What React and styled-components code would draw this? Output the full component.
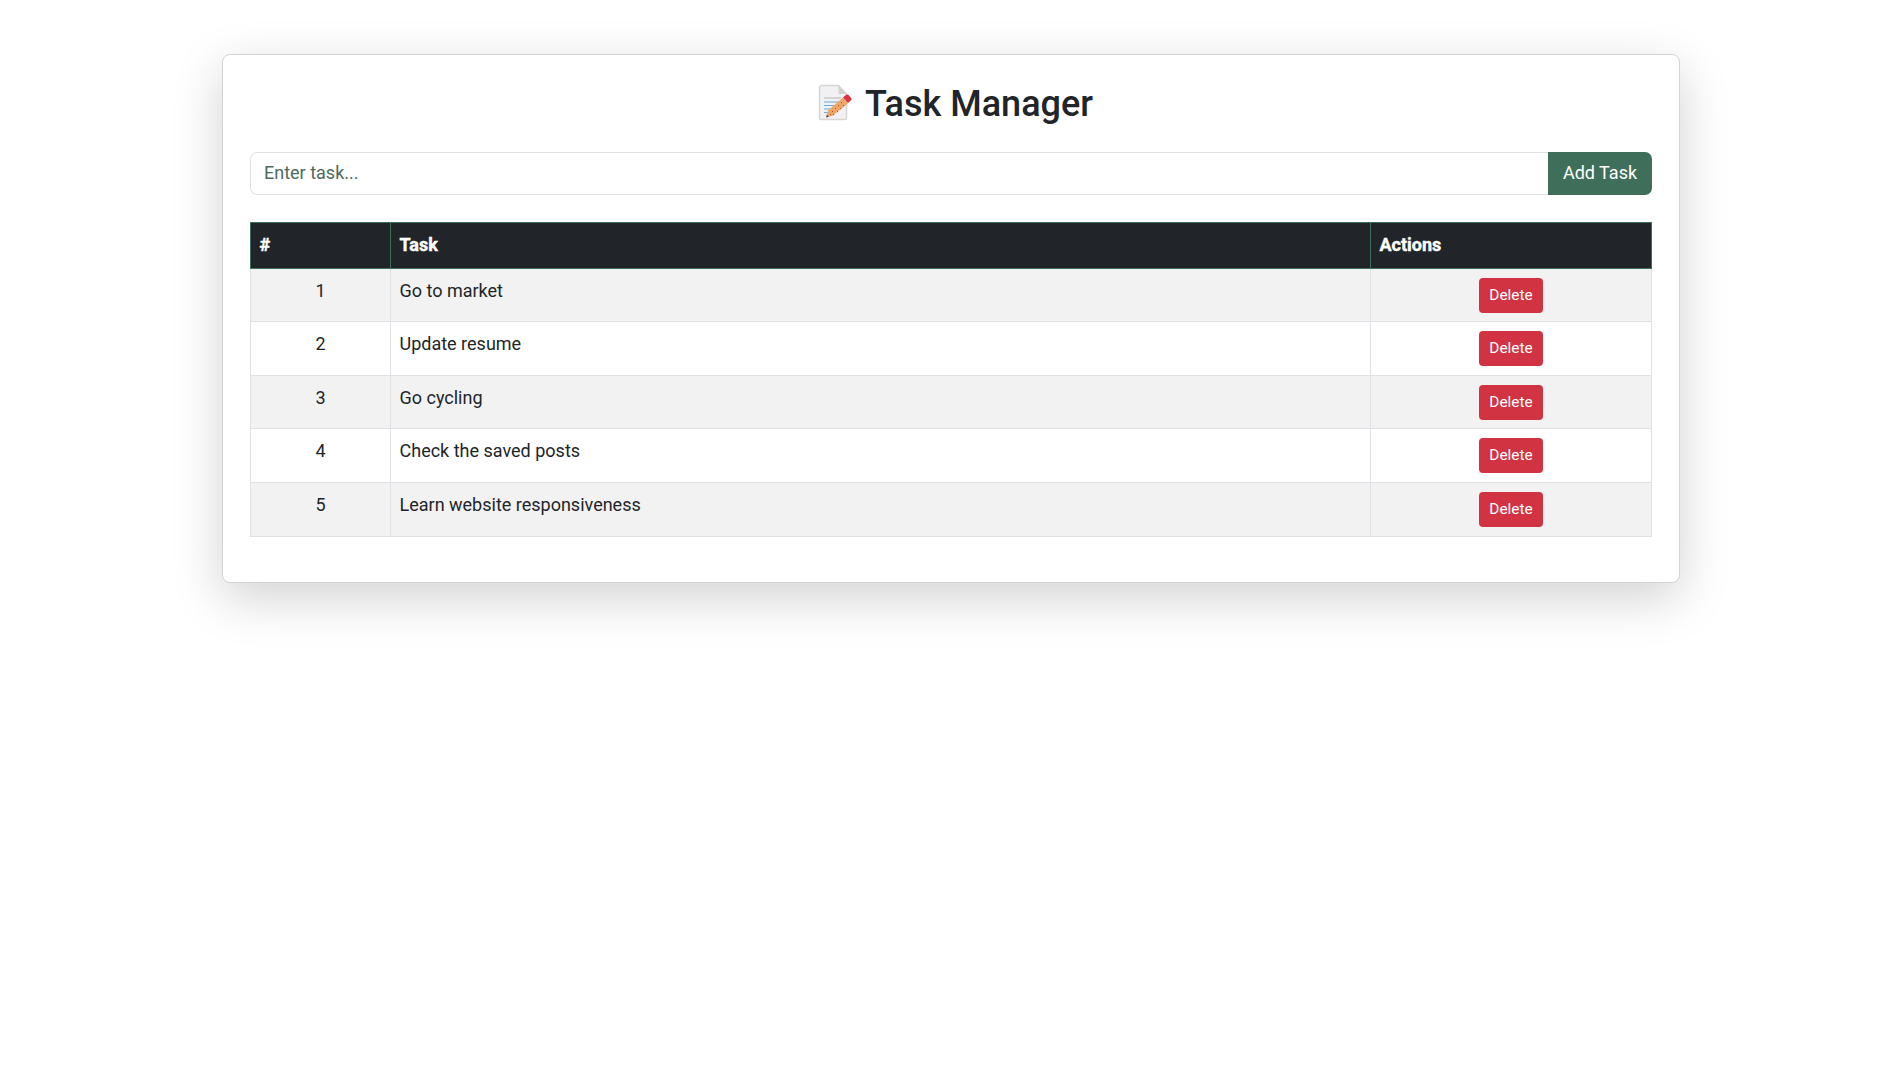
import React from 'react';
import styled, { createGlobalStyle } from 'styled-components';

const GlobalStyle = createGlobalStyle`
  body {
    margin: 0;
    background: #fff;
    font-family: Roboto, "Liberation Sans", sans-serif;
    color: #212529;
  }
`;

const Page = styled.div`
  padding-top: 54px;
  display: flex;
  justify-content: center;
  padding-left: 2px;
  min-height: 1024px;
`;

const Card = styled.main`
  box-sizing: border-box;
  width: 1458px;
  height: 529px;
  padding: 24px 27px 0;
  background: #fff;
  border: 1px solid #d4d4d4;
  border-radius: 8px;
  box-shadow: 0 15px 50px rgba(0, 0, 0, 0.18);
`;

const Title = styled.h1`
  display: flex;
  align-items: center;
  justify-content: center;
  gap: 11px;
  margin: 0 0 23px;
  padding-left: 9px;
  height: 50px;
  font-size: 36px;
  font-weight: 500;
  line-height: 50px;
`;

const TitleIcon = styled.svg`
  margin-top: -4px;
`;

const TaskForm = styled.form`
  display: flex;
  height: 43px;
  margin-bottom: 27px;
`;

const TaskInput = styled.input`
  flex: 1;
  box-sizing: border-box;
  min-width: 0;
  padding: 0 13px 2px;
  border: 1px solid #dee2e6;
  border-right: 0;
  border-radius: 7px 0 0 7px;
  font: 400 18px Roboto, sans-serif;
  color: #212529;
  outline: none;
  &::placeholder {
    color: #4d6b5c;
    opacity: 1;
  }
`;

const AddButton = styled.button`
  width: 104px;
  padding: 0 0 2px;
  border: 0;
  border-radius: 0 7px 7px 0;
  background: #3f6f5a;
  color: #fff;
  font: 400 18px Roboto, sans-serif;
`;

const TaskTable = styled.table`
  width: 1402px;
  table-layout: fixed;
  border-collapse: collapse;
  font-size: 18px;
  line-height: 24px;
`;

const HeadCell = styled.th`
  height: 45.6px;
  box-sizing: border-box;
  padding: 0 8.5px 1px;
  background: #212529;
  color: #fff;
  border: 1px solid #3f6f5a;
  text-align: left;
  font-weight: 700;
  -webkit-text-stroke: 0.4px #fff;
  width: ${p => p.$width || 'auto'};
`;

const Row = styled.tr`
  background: ${p => (p.$striped ? '#f2f2f2' : '#fff')};
`;

const Cell = styled.td`
  height: 53.6px;
  box-sizing: border-box;
  padding: 10px 8.5px 0;
  vertical-align: top;
  border: 1px solid #dee2e6;
  text-align: ${p => p.$align || 'left'};
`;

const ActionCell = styled(Cell)`
  padding-top: 9px;
`;

const DeleteButton = styled.button`
  display: block;
  width: 64px;
  height: 35px;
  margin: 0 auto;
  padding: 0 0 1px;
  border: 0;
  border-radius: 4px;
  background: #d13343;
  color: #fff;
  font: 400 15.4px Roboto, sans-serif;
`;

const tasks = ['Go to market', 'Update resume', 'Go cycling', 'Check the saved posts', 'Learn website responsiveness'];

function MemoIcon() {
  return (
    <TitleIcon width="36" height="37" viewBox="0 0 36 36" aria-hidden="true">
      <path d="M3.500 1h17l8 8.500v24a1.500 1.500 0 0 1-1.500 1.500H3a1.500 1.500 0 0 1-1.500-1.500V3a2 2 0 0 1 2-2z" fill="#f1f1f3" stroke="#d6d6d6" strokeWidth="1.5" />
      <path d="M20.500 1v8.500h8z" fill="#d2d2d2" />
      <path d="M6 13.500h17" stroke="#c9c9c9" strokeWidth="1.5" />
      <path d="M6 17.500h15M6 21h12M6 24.500h8M6 28h5" stroke="#64a9e4" strokeWidth="1.2" />
      <path d="M8 33l2-7 15-13 5 6-15 12z" fill="#eda767" />
      <path d="M8 33l.8-2.800 2.200 1.800z" fill="#31507a" />
      <path d="M25 13l3-2.500c1-.8 2-.6 3 .4l2 2.400c.8 1 .7 2-.2 2.800L30 18.500z" fill="#dd3444" />
      <path d="M14 27l1 .1M17 24l1 .1M20 21l1 .1M23 18l1 .1M15 30l1 .1M19 27l1 .1M22 24l1 .1M25 21l1 .1M12 30l1 .1" stroke="#c8452f" strokeWidth="1.2" />
    </TitleIcon>
  );
}

export default function App() {
  return (
    <>
      <GlobalStyle />
      <Page>
        <Card>
          <Title><MemoIcon />Task Manager</Title>
          <TaskForm onSubmit={e => e.preventDefault()}>
            <TaskInput placeholder="Enter task..." />
            <AddButton type="submit">Add Task</AddButton>
          </TaskForm>
          <TaskTable>
            <thead>
              <tr>
                <HeadCell $width="140px">#</HeadCell>
                <HeadCell>Task</HeadCell>
                <HeadCell $width="281px">Actions</HeadCell>
              </tr>
            </thead>
            <tbody>
              {tasks.map((task, i) => (
                <Row key={task} $striped={i % 2 === 0}>
                  <Cell $align="center">{i + 1}</Cell>
                  <Cell>{task}</Cell>
                  <ActionCell><DeleteButton>Delete</DeleteButton></ActionCell>
                </Row>
              ))}
            </tbody>
          </TaskTable>
        </Card>
      </Page>
    </>
  );
}
